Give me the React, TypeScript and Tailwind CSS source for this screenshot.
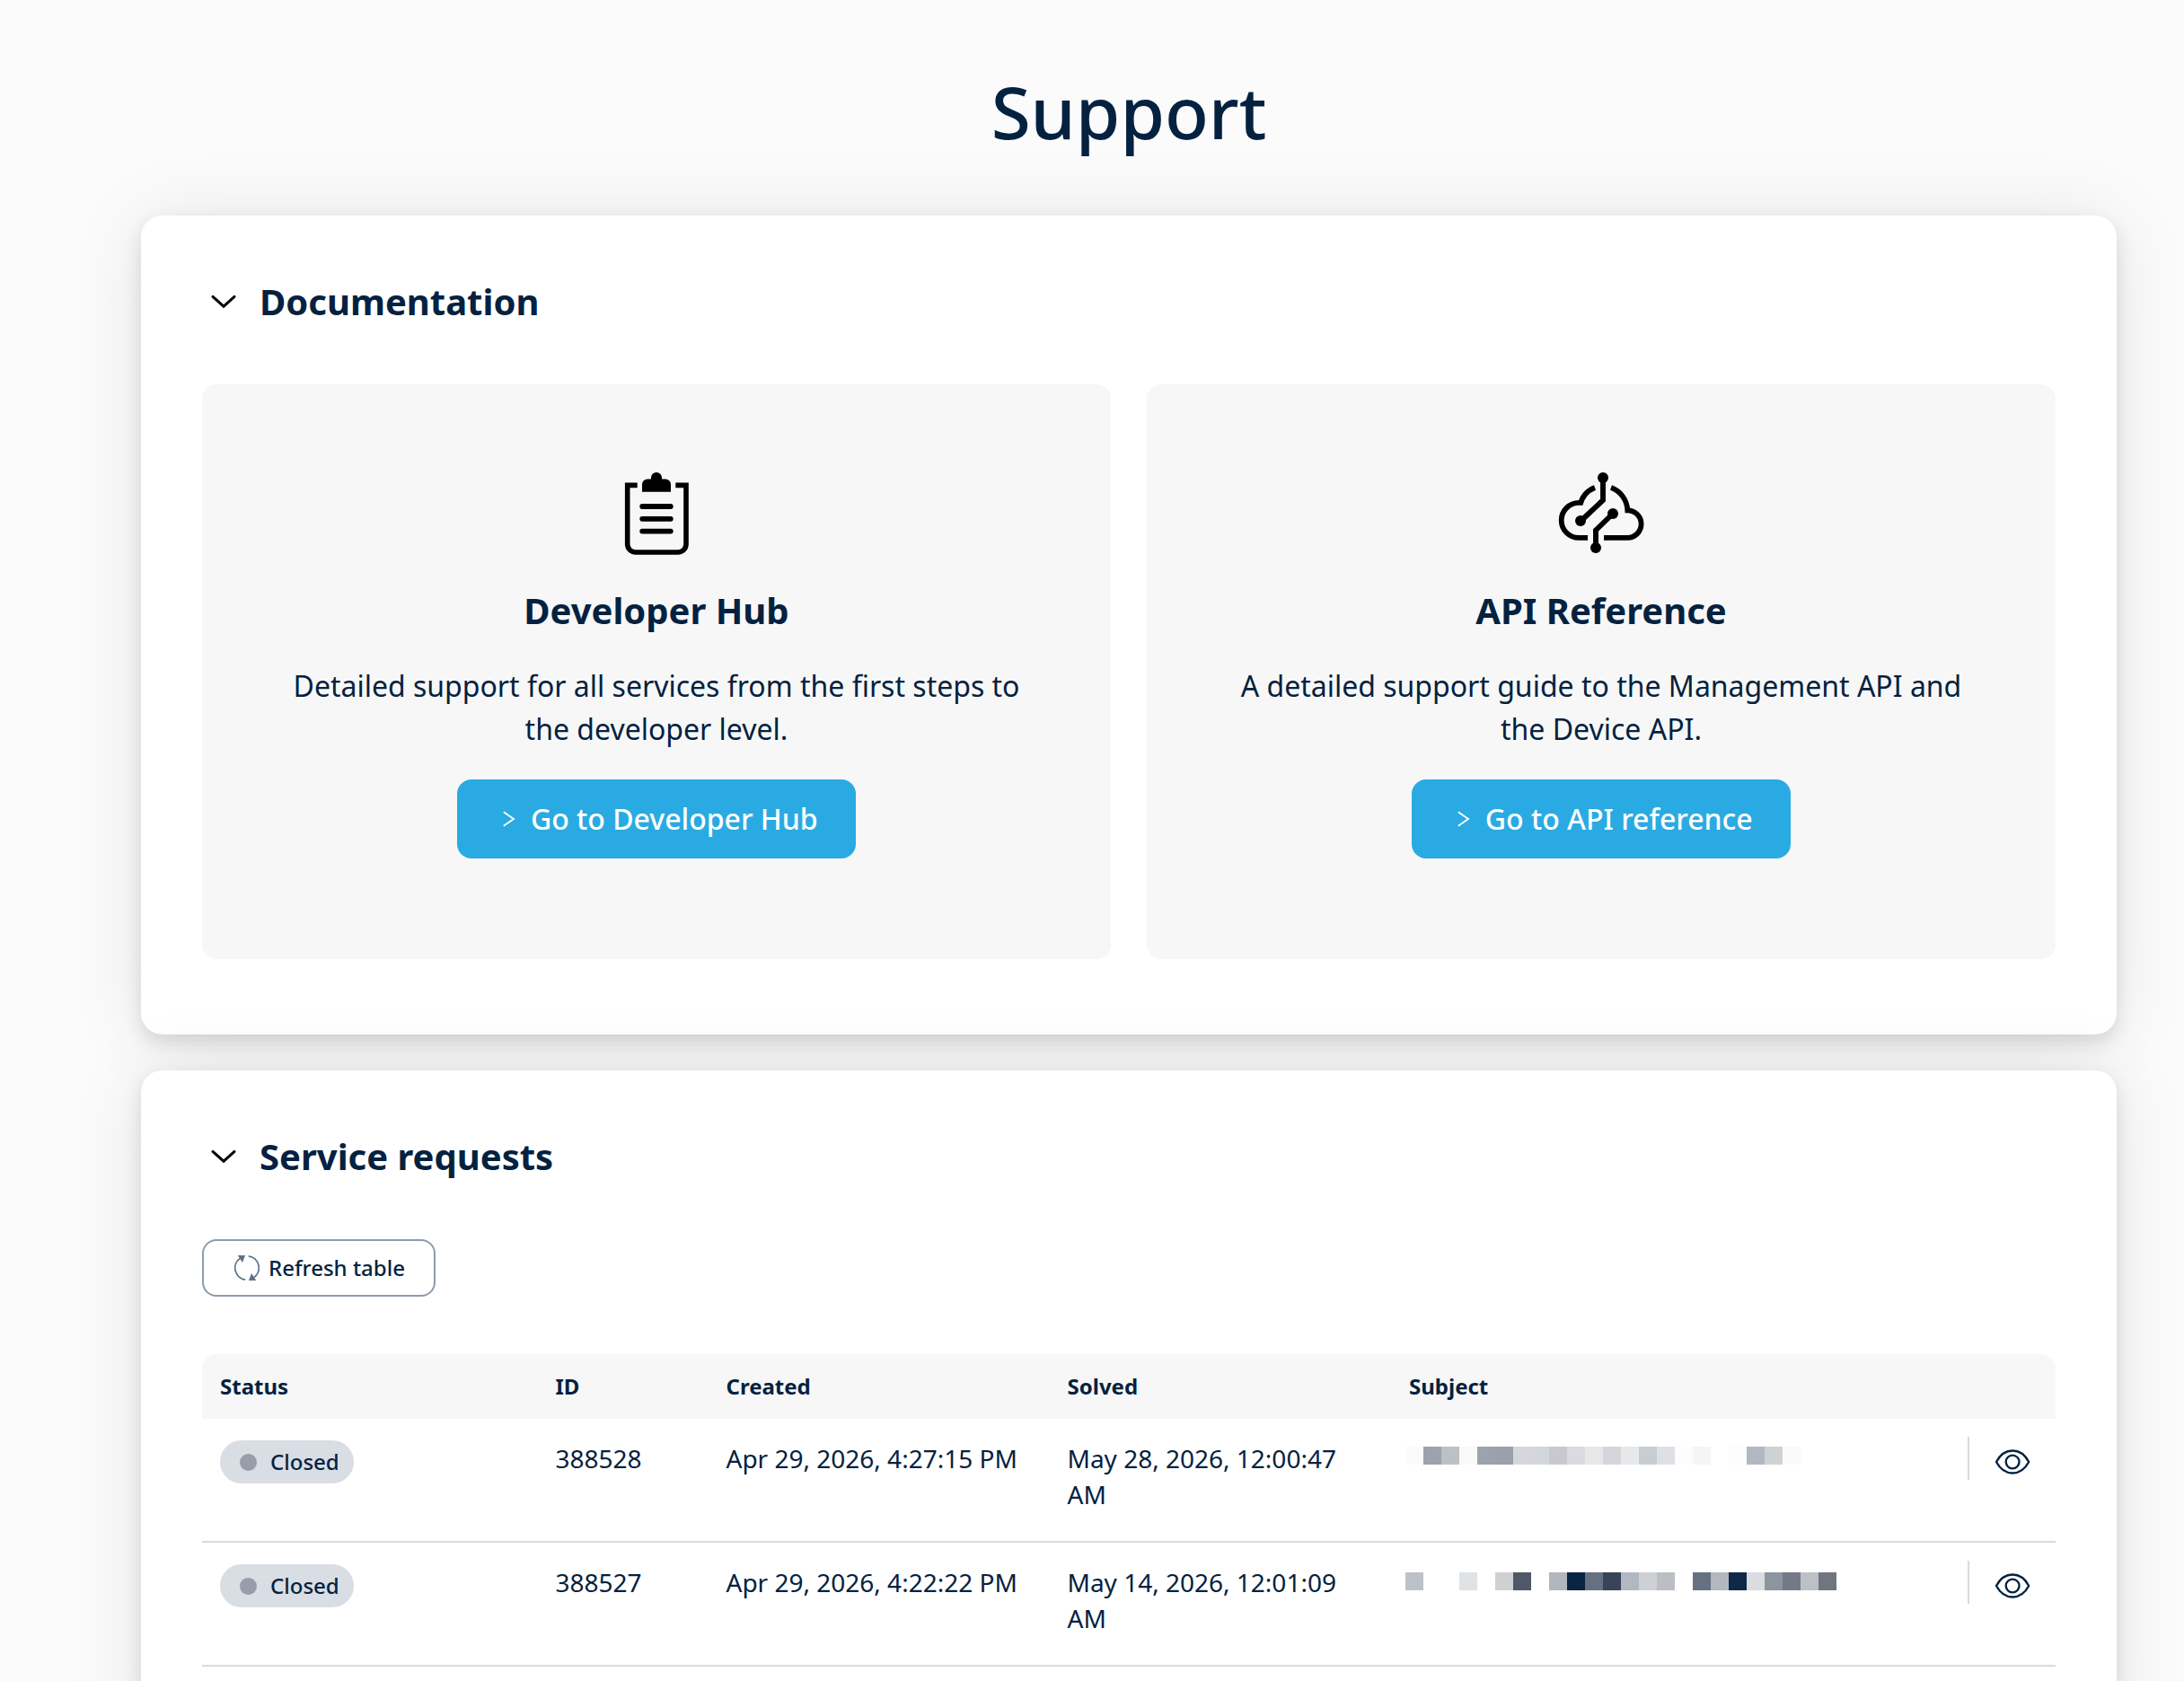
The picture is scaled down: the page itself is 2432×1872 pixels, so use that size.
import type { ReactNode } from "react";

const requests = [
    {
        id: "388528",
        created: "Apr 29, 2026, 4:27:15 PM",
        solved: "May 28, 2026, 12:00:47 AM",
        top: "pt-[31px]",
        subject: ["#fbfbfb", "#9ca3ad", "#bdc1c6", "#fafafa", "#9ca3ad", "#9aa1ab", "#d5d7da", "#d3d7da", "#c8c9cc", "#dadbdf", "#e6e7e9", "#d5d6da", "#e7e8e9", "#cacdd0", "#dee1e4", "#fdfdfd", "#f4f5f7", "", "#fcfcfc", "#b1b8c1", "#d0d1d5", "#fafafa"],
    },
    {
        id: "388527",
        created: "Apr 29, 2026, 4:22:22 PM",
        solved: "May 14, 2026, 12:01:09 AM",
        top: "pt-[33px]",
        subject: ["#bdc2ca", "", "", "#dfe3e6", "", "#cfd0d4", "#4f5869", "", "#b2b6be", "#082543", "#677080", "#374459", "#b1b8c1", "#cfd0d4", "#bbbec3", "", "#667080", "#b4b7c0", "#0e2947", "#dbdce0", "#8c949f", "#737987", "#bdc1c6", "#717580"],
    },
];

function ClipboardIcon(){
    return(
        <svg className="size-24" viewBox="0 0 96 96" fill="none" stroke="#000">
            <path d="M26.7 16.4H15.7V82a9 9 0 0 0 9 9H72a9 9 0 0 0 9-9V16.4H69.3" strokeWidth="5.6" />
            <path d="M32 23.7V15.5a6 6 0 0 1 6-6h4V8a6 6 0 0 1 12 0v1.5h4a6 6 0 0 1 6 6v8.2z" fill="#000" stroke="none" />
            <path d="M32.2 40H63.8M32.2 53.8H63.8M32.2 67.6H63.8" strokeWidth="5.8" strokeLinecap="round" />
        </svg>
    )
}

function CloudIcon(){
    return(
        <svg className="size-24" viewBox="0 0 96 96" fill="none" stroke="#000" strokeWidth="5.8">
            <path d="M41 19A27 27 0 0 0 24.6 38" />
            <path d="M26.7 35.9H23.2a19.5 19.5 0 0 0 0 39H33" />
            <path d="M59 19A28 28 0 0 1 77.3 44.3V44.3A15.3 15.3 0 0 1 77.3 74.9H51" />
            <path d="M50 8V33L25 56.5M61 48L42 66.5V86" strokeWidth="5.9" />
            <g fill="#000" stroke="none">
                <circle cx="50" cy="8" r="6" />
                <circle cx="25" cy="56" r="6" />
                <circle cx="61" cy="48" r="6" />
                <circle cx="42" cy="86" r="6" />
            </g>
        </svg>
    )
}

function RefreshIcon(){
    return(
        <svg className="size-7" viewBox="0 0 28 28" fill="none" stroke="#5d7187" strokeWidth="1.8">
            <path d="M12.2 27.1A13.2 13.2 0 0 1 6.8 2.9M15.8 0.9A13.2 13.2 0 0 1 21.2 25.1" />
            <path d="M3.8 0H12L9 8zM24.2 28H16l3-8z" fill="#5d7187" stroke="none" />
        </svg>
    )
}

function EyeIcon(){
    return(
        <svg className="size-12" viewBox="0 0 48 48" fill="none" stroke="#042240" strokeWidth="2.4" strokeLinejoin="round">
            <path d="M6 24C15 7.4 33.2 7.4 42.2 24C33.2 40.6 15 40.6 6 24Z" />
            <circle cx="24.1" cy="24" r="7.4" />
        </svg>
    )
}

function Panel({title, children}:{title:string, children:ReactNode}){
    return(
        <section className="rounded-3xl bg-white px-[68px] pt-[72px] pb-[84px] shadow-[0_8px_20px_rgba(0,0,0,0.12),0_4px_88px_rgba(0,0,0,0.09)]">
            <div className="mb-[68px] flex h-12 items-center gap-4">
                <svg className="size-12" viewBox="0 0 48 48" fill="none" stroke="#000" strokeWidth="3" strokeLinecap="round">
                    <path d="M12 18.4L24 29.2L36 18.4" />
                </svg>
                <h2 className="text-[40px] leading-[48px] font-bold">{title}</h2>
            </div>
            {children}
        </section>
    )
}

function DocCard({icon, title, text, action}:{icon:ReactNode, title:string, text:string, action:string}){
    return(
        <div className="flex h-[640px] flex-1 flex-col items-center rounded-2xl bg-[#f7f7f7] pt-24 text-center">
            {icon}
            <h3 className="mt-9 text-[40px] leading-[48px] font-bold">{title}</h3>
            <p className="mt-9 w-[820px] text-[32px] leading-[48px]">{text}</p>
            <button className="mt-8 flex h-[88px] items-center rounded-2xl bg-[#2aaae2] pr-[42.5px] pl-[50px] text-[32px] leading-[48px] font-medium text-white">
                <svg className="mr-4 h-[18px] w-4" viewBox="0 0 16 18" fill="none" stroke="#fff" strokeWidth="1.9">
                    <path d="M1.8 1.2L13 9L1.8 16.8" />
                </svg>
                {action}
            </button>
        </div>
    )
}

export default function App(){
    return(
        <div className="h-[1872px] w-[2432px] overflow-hidden bg-[#fbfbfb] pt-[76px] pr-[75px] pl-[157px] font-['Noto_Sans',sans-serif] text-[#042240]">
            <h1 className="mb-[68px] text-center text-[80px] leading-[96px] font-medium">Support</h1>
            <div className="flex flex-col gap-10">
                <Panel title="Documentation">
                    <div className="flex gap-10">
                        <DocCard
                            icon={<ClipboardIcon />}
                            title="Developer Hub"
                            text="Detailed support for all services from the first steps to the developer level."
                            action="Go to Developer Hub"
                        />
                        <DocCard
                            icon={<CloudIcon />}
                            title="API Reference"
                            text="A detailed support guide to the Management API and the Device API."
                            action="Go to API reference"
                        />
                    </div>
                </Panel>
                <Panel title="Service requests">
                    <button className="flex h-16 w-[260px] items-center gap-2.5 rounded-2xl border-2 border-[#8d9bab] pl-[34px] text-2xl font-medium">
                        <RefreshIcon />
                        Refresh table
                    </button>
                    <div className="mt-16">
                        <div className="grid h-[72px] grid-cols-[373.5px_190px_380px_380.5px_1fr] items-center rounded-t-2xl bg-[#f7f7f7] text-2xl font-bold">
                            <span className="pl-5">Status</span>
                            <span className="pl-5">ID</span>
                            <span className="pl-5">Created</span>
                            <span className="pl-5">Solved</span>
                            <span className="pl-5">Subject</span>
                        </div>
                        {requests.map((request) => (
                            <div key={request.id} className="grid h-[138px] grid-cols-[373.5px_190px_380px_380.5px_1fr_98px] items-start border-b-2 border-[#dbdbdb] text-[28px] leading-10">
                                <div className="pt-6 pl-5">
                                    <span className="flex h-12 w-[149px] items-center rounded-full bg-[#d9dde4] pl-[22px] text-2xl font-medium">
                                        <span className="mr-[15px] size-[19px] rounded-full bg-[#979eaa]"></span>
                                        Closed
                                    </span>
                                </div>
                                <span className="pt-6 pl-5">{request.id}</span>
                                <span className="pt-6 pl-5">{request.created}</span>
                                <span className="pt-6 pr-5 pl-5">{request.solved}</span>
                                <div className={`flex pl-4 ${request.top}`}>
                                    {request.subject.map((color, i) => (
                                        <span key={i} className="size-5" style={{ backgroundColor: color || "transparent" }}></span>
                                    ))}
                                </div>
                                <div className="mt-5 flex h-12 border-l-2 border-[#dbdbdb] pt-1 pl-6">
                                    <EyeIcon />
                                </div>
                            </div>
                        ))}
                    </div>
                </Panel>
            </div>
        </div>
    )
}
